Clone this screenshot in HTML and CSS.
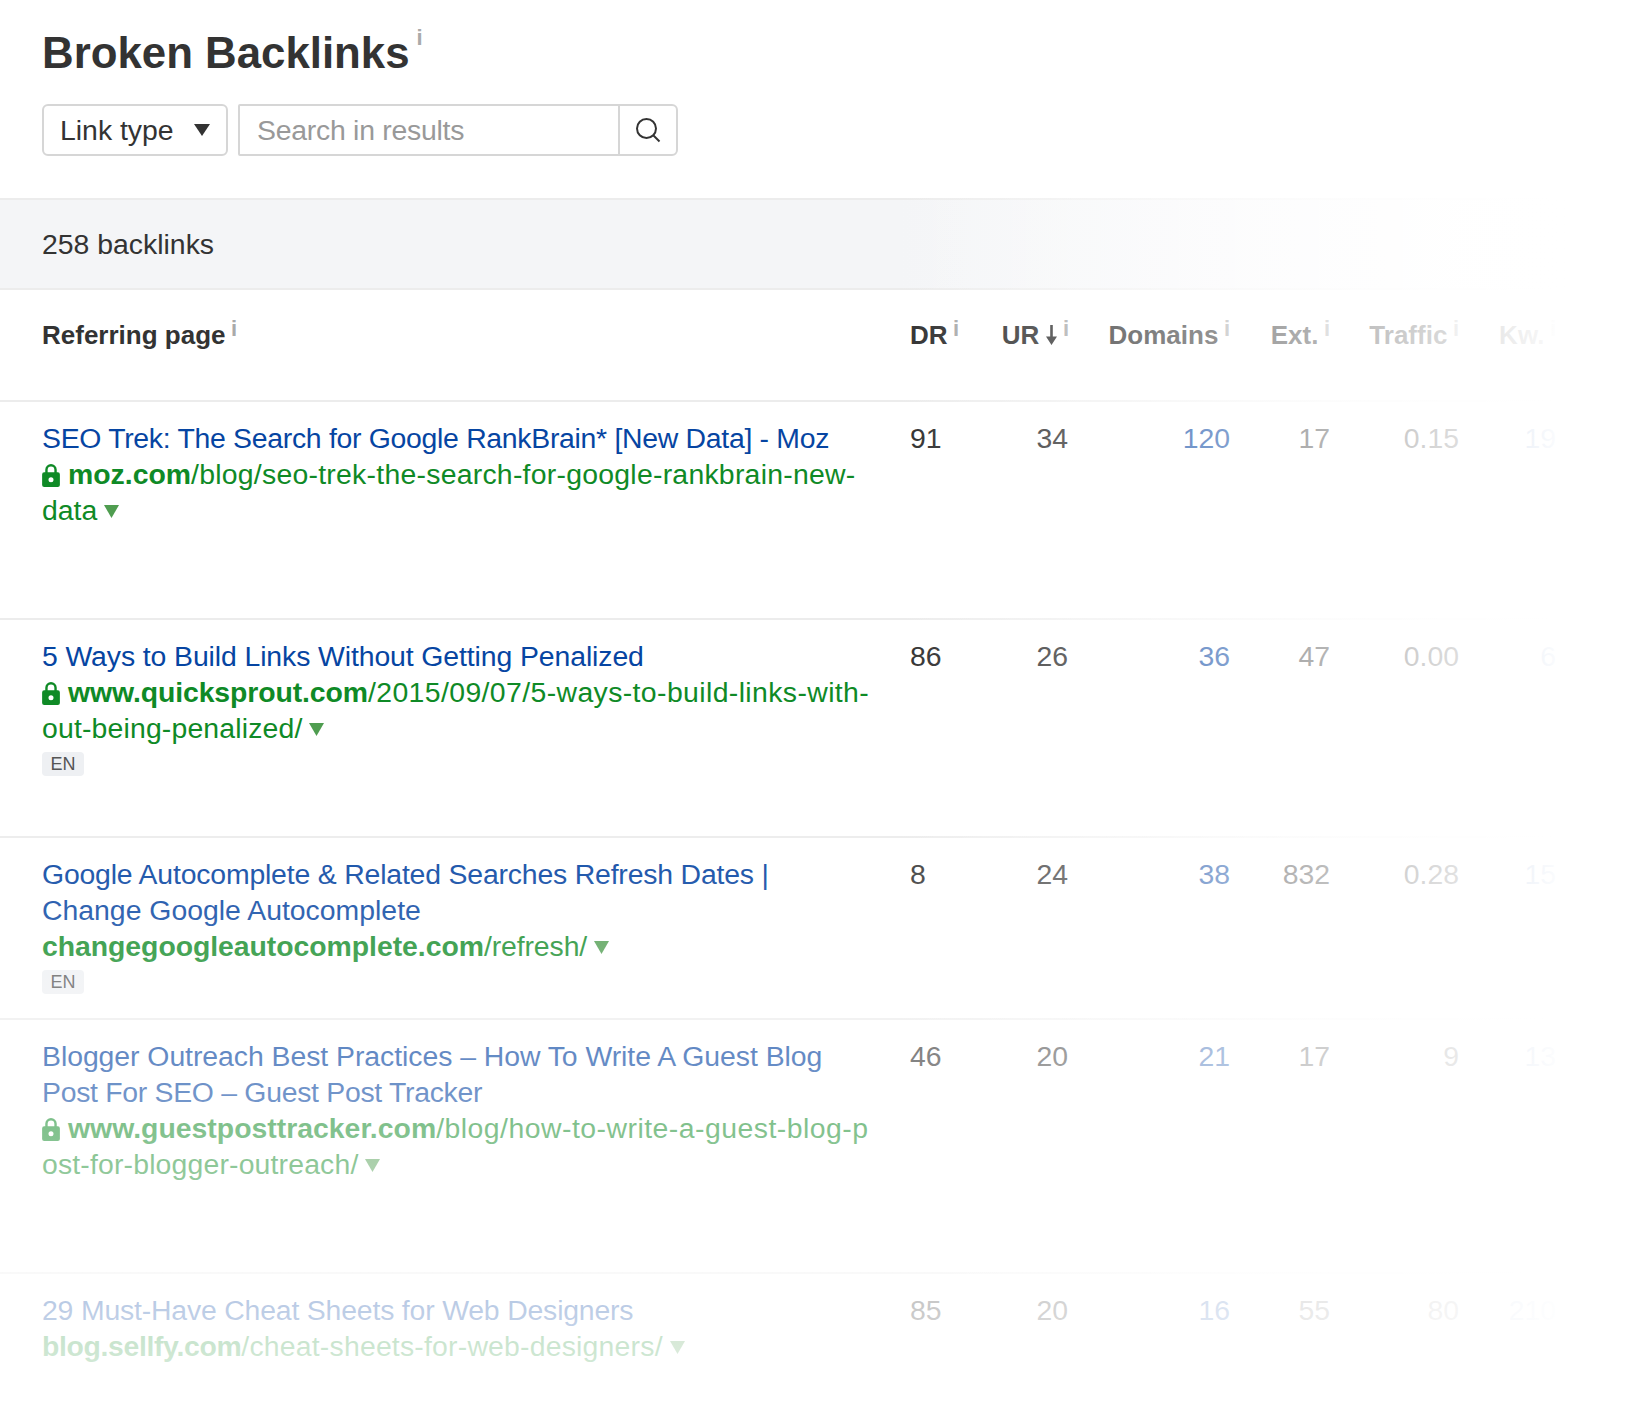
FILE: index.html
```html
<!DOCTYPE html>
<html lang="en">
<head>
<meta charset="utf-8">
<title>Broken Backlinks</title>
<link rel="stylesheet" href="styles.css">
</head>
<body>
<div class="page">
  <header class="top">
    <h1 class="title">Broken Backlinks<span class="info info-title">i</span></h1>
    <div class="controls">
      <div class="select"><span>Link type</span>
        <svg class="select-caret" width="16" height="12" viewBox="0 0 16 12"><path d="M0 0h16L8 12z"/></svg>
      </div>
      <div class="search">
        <span class="placeholder">Search in results</span>
        <div class="search-btn">
          <svg width="26" height="26" viewBox="0 0 26 26" fill="none" stroke="#333" stroke-width="2"><circle cx="11.5" cy="11.5" r="9.500"/><path d="M18.500 18.500l6 6"/></svg>
        </div>
      </div>
    </div>
  </header>

  <div class="band">258 backlinks</div>

  <div class="grid head">
    <div class="name-head">Referring page<span class="info">i</span></div>
    <div class="left">DR<span class="info">i</span></div>
    <div class="ur-head">UR<svg class="sort" width="11" height="20" viewBox="0 0 11 20"><path d="M4.200 0h2.600v11.500H11L5.500 20 0 11.500h4.200z"/></svg><span class="info">i</span></div>
    <div>Domains<span class="info">i</span></div>
    <div>Ext.<span class="info">i</span></div>
    <div>Traffic<span class="info">i</span></div>
    <div>Kw.<span class="info">i</span></div>
  </div>

  <div class="grid row row-tall">
    <div class="page-cell">
      <a class="page-title ls-n28">SEO Trek: The Search for Google RankBrain* [New Data] - Moz</a>
      <div class="url"><svg class="lock" width="18" height="23" viewBox="0 0 17 22"><path fill-rule="evenodd" d="M3 8V5.500a5.500 5.500 0 0 1 11 0V8h1a2 2 0 0 1 2 2v10a2 2 0 0 1-2 2H2a2 2 0 0 1-2-2V10a2 2 0 0 1 2-2zm2.300 0h6.400V5.500a3.200 3.200 0 0 0-6.400 0zM8.500 12.600a2.400 2.400 0 1 0 0 4.800 2.400 2.400 0 0 0 0-4.800z"/></svg><b>moz.com</b><span class="ls-p25">/blog/seo-trek-the-search-for-google-rankbrain-new-</span><br>data<svg class="caret" width="15" height="13" viewBox="0 0 15 13"><path d="M0 0h15L7.500 13z"/></svg></div>
    </div>
    <div class="left">91</div><div>34</div><div class="link">120</div><div>17</div><div>0.15</div><div class="link">19</div>
  </div>

  <div class="grid row row-mid">
    <div class="page-cell">
      <a class="page-title ls-n09">5 Ways to Build Links Without Getting Penalized</a>
      <div class="url"><svg class="lock" width="18" height="23" viewBox="0 0 17 22"><path fill-rule="evenodd" d="M3 8V5.500a5.500 5.500 0 0 1 11 0V8h1a2 2 0 0 1 2 2v10a2 2 0 0 1-2 2H2a2 2 0 0 1-2-2V10a2 2 0 0 1 2-2zm2.300 0h6.400V5.500a3.200 3.200 0 0 0-6.400 0zM8.500 12.600a2.400 2.400 0 1 0 0 4.800 2.400 2.400 0 0 0 0-4.800z"/></svg><b class="ls-n09">www.quicksprout.com</b><span class="ls-p39">/2015/09/07/5-ways-to-build-links-with-</span><br><span class="ls-p15">out-being-penalized/</span><svg class="caret" width="15" height="13" viewBox="0 0 15 13"><path d="M0 0h15L7.500 13z"/></svg></div>
      <span class="badge">EN</span>
    </div>
    <div class="left">86</div><div>26</div><div class="link">36</div><div>47</div><div>0.00</div><div class="link">6</div>
  </div>

  <div class="grid row">
    <div class="page-cell">
      <a class="page-title"><span class="ls-n19">Google Autocomplete &amp; Related Searches Refresh Dates |</span><br>Change Google Autocomplete</a>
      <div class="url"><b class="ls-n04">changegoogleautocomplete.com</b><span class="ls-n09">/refresh/</span><svg class="caret" width="15" height="13" viewBox="0 0 15 13"><path d="M0 0h15L7.500 13z"/></svg></div>
      <span class="badge">EN</span>
    </div>
    <div class="left">8</div><div>24</div><div class="link">38</div><div>832</div><div>0.28</div><div class="link">15</div>
  </div>

  <div class="grid row row-tall">
    <div class="page-cell">
      <a class="page-title"><span class="ls-n04">Blogger Outreach Best Practices – How To Write A Guest Blog</span><br><span class="ls-n28">Post For SEO – Guest Post Tracker</span></a>
      <div class="url"><svg class="lock" width="18" height="23" viewBox="0 0 17 22"><path fill-rule="evenodd" d="M3 8V5.500a5.500 5.500 0 0 1 11 0V8h1a2 2 0 0 1 2 2v10a2 2 0 0 1-2 2H2a2 2 0 0 1-2-2V10a2 2 0 0 1 2-2zm2.300 0h6.400V5.500a3.200 3.200 0 0 0-6.400 0zM8.500 12.600a2.400 2.400 0 1 0 0 4.800 2.400 2.400 0 0 0 0-4.800z"/></svg><b>www.guestposttracker.com</b><span class="ls-p48">/blog/how-to-write-a-guest-blog-p</span><br><span class="ls-p15">ost-for-blogger-outreach/</span><svg class="caret" width="15" height="13" viewBox="0 0 15 13"><path d="M0 0h15L7.500 13z"/></svg></div>
    </div>
    <div class="left">46</div><div>20</div><div class="link">21</div><div>17</div><div>9</div><div class="link">13</div>
  </div>

  <div class="grid row last">
    <div class="page-cell">
      <a class="page-title ls-n19">29 Must-Have Cheat Sheets for Web Designers</a>
      <div class="url"><b class="ls-n35">blog.sellfy.com</b><span class="ls-p20">/cheat-sheets-for-web-designers/</span><svg class="caret" width="15" height="13" viewBox="0 0 15 13"><path d="M0 0h15L7.500 13z"/></svg></div>
    </div>
    <div class="left">85</div><div>20</div><div class="link">16</div><div>55</div><div>80</div><div class="link">210</div>
  </div>

  <div class="fade"></div>
</div>
</body>
</html>
```

FILE: styles.css
```css
* { box-sizing: border-box; }
html, body { margin: 0; padding: 0; background: #fff; }
body {
  font-family: "Liberation Sans", Arial, sans-serif;
  font-size: 28.4px;
  line-height: 36px;
  color: #333;
}
.page { position: relative; width: 1636px; height: 1410px; overflow: hidden; }

.top { padding: 28px 0 42px 42px; }
.title { margin: 0; font-size: 43.8px; line-height: 50px; font-weight: 700; color: #333; }
.info { font-size: 22px; font-weight: 700; color: #aaa; line-height: 0; margin-left: 5.5px; vertical-align: 8px; }
.info-title { margin-left: 7px; vertical-align: 23px; }

.controls { display: flex; gap: 10px; margin-top: 26px; }
.select {
  width: 186px; height: 52px; padding: 0 16px;
  display: flex; align-items: center; justify-content: space-between;
  border: 2px solid #d6d6d6; border-radius: 6px;
}
.select-caret { fill: #333; }
.search {
  width: 440px; height: 52px;
  display: flex; align-items: center; justify-content: space-between;
  border: 2px solid #d6d6d6; border-radius: 2px 6px 6px 2px;
}
.placeholder { padding-left: 17px; color: #999; letter-spacing: -0.25px; }
.search-btn {
  width: 58px; height: 100%;
  display: flex; align-items: center; justify-content: center;
  border-left: 2px solid #d6d6d6;
}

.band {
  height: 92px; padding-left: 42px;
  display: flex; align-items: center;
  background: linear-gradient(to right, #f4f5f7 900px, #fff 1600px);
  border-top: 2px solid;
  border-bottom: 2px solid;
  border-image: linear-gradient(to right, #ececec 55%, #fff 100%) 1;
}

.grid {
  display: grid;
  grid-template-columns: 868px 71px 87px 162px 100px 129px 97px;
  padding: 18px 80px 24px 42px;
  border-bottom: 2px solid;
  border-image: linear-gradient(to right, #ececec 55%, #fff 100%) 1;
  text-align: right;
}
.grid .left, .page-cell, .name-head { text-align: left; }
.head { padding-top: 27px; padding-bottom: 47px; font-size: 26px; font-weight: 700; }
.ur-head { margin-right: -1px; }
.sort { fill: #333; margin-left: 7px; vertical-align: -1px; }

.row-tall { padding-bottom: 90px; }
.row-mid { padding-bottom: 60px; }
.last { border-bottom: 0; }

.page-title { display: block; color: #0645a2; }
.link { color: #0645a2; }
.url { color: #0f8a26; }
.url b { font-weight: 700; }
.lock { fill: #0f8a26; margin-right: 8px; vertical-align: -3px; }
.caret { fill: #4f9d50; margin-left: 7px; vertical-align: 2px; }
.badge {
  display: block; width: 42px; height: 24px; margin-top: 6px;
  font-size: 18px; line-height: 24px; text-align: center;
  color: #555; background: #eef0f3; border-radius: 4px;
}

/* per-line tracking, to stand in for the reference font's metrics */
.ls-n35 { letter-spacing: -0.35px; }
.ls-n28 { letter-spacing: -0.29px; }
.ls-n19 { letter-spacing: -0.18px; }
.ls-n09 { letter-spacing: -0.1px; }
.ls-n04 { letter-spacing: -0.05px; }
.ls-p15 { letter-spacing: 0.16px; }
.ls-p20 { letter-spacing: 0.2px; }
.ls-p25 { letter-spacing: 0.25px; }
.ls-p39 { letter-spacing: 0.39px; }
.ls-p48 { letter-spacing: 0.48px; }

.fade {
  position: absolute; inset: 0; pointer-events: none;
  background:
    linear-gradient(to right, rgba(255,255,255,0) 900px, #fff 1570px),
    linear-gradient(to bottom, rgba(255,255,255,0) 790px, #fff 1500px);
}
```
